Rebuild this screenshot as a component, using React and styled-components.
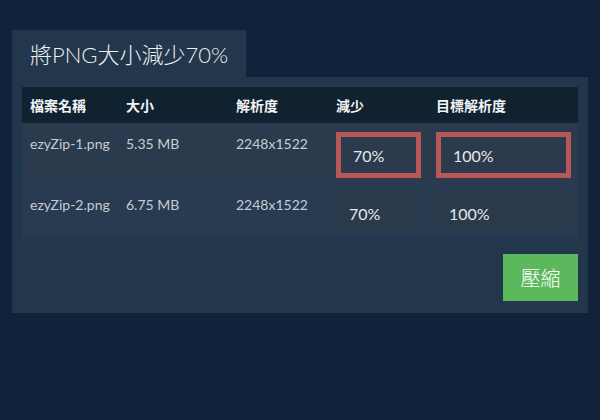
import React from "react";
import styled, { createGlobalStyle } from "styled-components";

const Global = createGlobalStyle`
  html, body { margin: 0; padding: 0; background: #11233a; }
  body { font-family: Lato, "Noto Sans CJK TC", sans-serif; }
  * { box-sizing: border-box; }
`;

const Page = styled.div`
  width: 600px;
  height: 420px;
  background: #11233a;
  padding: 30px 12px 0 12px;
`;

const Tab = styled.div`
  width: 234px;
  height: 47px;
  background: #22364c;
  color: #eef1f4;
  font-family: Lato, "Noto Sans CJK TC", sans-serif;
  font-weight: 300;
  font-size: 22px;
  padding-left: 18px;
  display: flex;
  align-items: center;
  padding-bottom: 2px;
`;

const Panel = styled.div`
  width: 576px;
  height: 236px;
  background: #22364c;
  padding: 10px 10px 0 10px;
  display: flex;
  flex-direction: column;
`;

const cols = "96px 110px 100px 100px 150px";

const HeadRow = styled.div`
  display: grid;
  grid-template-columns: ${cols};
  height: 36px;
  background: #10212f;
  align-items: center;
`;

const HeadCell = styled.div`
  padding-left: 8px;
  color: #f2f4f6;
  font-weight: 700;
  font-size: 14px;
  font-family: Lato, "Noto Sans CJK TC", sans-serif;
  padding-bottom: 1px;
`;

const Row = styled.div`
  display: grid;
  grid-template-columns: ${cols};
  height: ${(p) => p.$h}px;
  background: ${(p) => p.$bg};
  align-items: start;
`;

const Cell = styled.div`
  padding-left: 8px;
  padding-top: ${(p) => p.$pt}px;
  color: #c6ccd3;
  font-size: 14px;
  line-height: 16px;
`;

const InputCell = styled.div`
  padding-left: 8px;
  padding-top: ${(p) => p.$pt}px;
`;

const Field = styled.div`
  width: ${(p) => p.$w}px;
  height: ${(p) => p.$h}px;
  background: ${(p) => (p.$focus ? "#2b3a4c" : "#2a3a4b")};
  border: ${(p) => (p.$focus ? "5px solid #b85757" : "none")};
  padding-left: ${(p) => (p.$focus ? 12 : 13)}px;
  display: flex;
  align-items: center;
  color: #e6e9ec;
  font-size: 16px;
  padding-top: 1px;
`;

const Footer = styled.div`
  display: flex;
  justify-content: flex-end;
  margin-top: 17px;
`;

const Button = styled.button`
  width: 75px;
  height: 47px;
  background: #5cb85c;
  border: none;
  color: #ffffff;
  font-family: "Noto Sans CJK TC", sans-serif;
  font-weight: 300;
  font-size: 20px;
  padding: 0;
  cursor: pointer;
`;

const rows = [
  { name: "ezyZip-1.png", size: "5.35 MB", res: "2248x1522", focus: true, h: 60, bg: "#2b3a4c", tp: 13, ip: 9, fh: 46 },
  { name: "ezyZip-2.png", size: "6.75 MB", res: "2248x1522", focus: false, h: 54, bg: "#283b51", tp: 14, ip: 11, fh: 37 },
];

export default function App() {
  return (
    <>
      <Global />
      <Page>
        <Tab>將PNG大小減少70%</Tab>
        <Panel>
          <HeadRow>
            <HeadCell>檔案名稱</HeadCell>
            <HeadCell>大小</HeadCell>
            <HeadCell>解析度</HeadCell>
            <HeadCell>減少</HeadCell>
            <HeadCell>目標解析度</HeadCell>
          </HeadRow>
          {rows.map((r) => (
            <Row key={r.name} $h={r.h} $bg={r.bg}>
              <Cell $pt={r.tp}>{r.name}</Cell>
              <Cell $pt={r.tp}>{r.size}</Cell>
              <Cell $pt={r.tp}>{r.res}</Cell>
              <InputCell $pt={r.ip}>
                <Field $w={85} $h={r.fh} $focus={r.focus}>70%</Field>
              </InputCell>
              <InputCell $pt={r.ip}>
                <Field $w={135} $h={r.fh} $focus={r.focus}>100%</Field>
              </InputCell>
            </Row>
          ))}
          <Footer>
            <Button>壓縮</Button>
          </Footer>
        </Panel>
      </Page>
    </>
  );
}
